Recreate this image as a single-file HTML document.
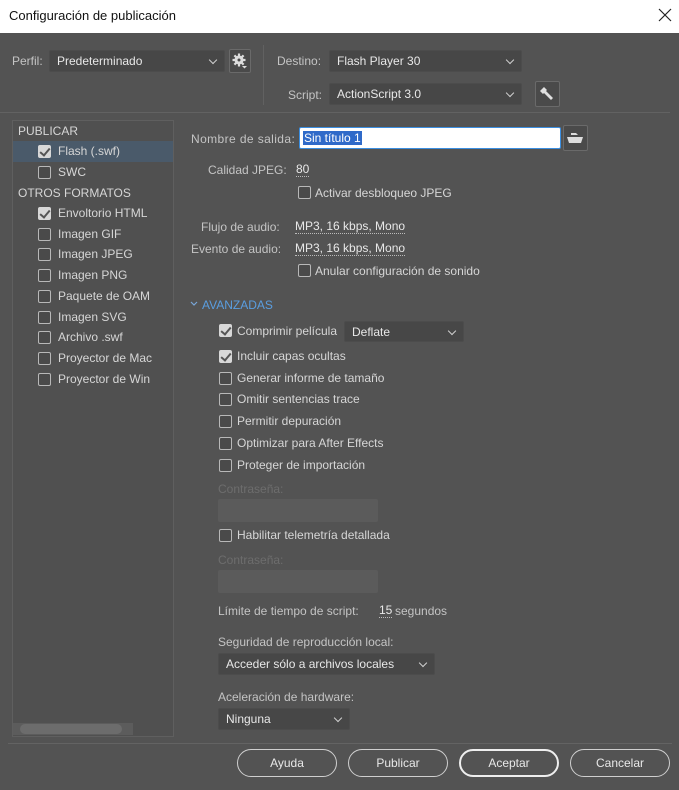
<!DOCTYPE html>
<html><head><meta charset="utf-8"><style>
*{box-sizing:border-box;margin:0;padding:0}
body{width:679px;height:790px;background:#535353;font-family:"Liberation Sans",sans-serif;font-size:12px;color:#d6d6d6;position:relative;overflow:hidden}
.a{position:absolute;white-space:nowrap}
.t{line-height:14px}
.lbl{color:#c4c4c4}
.dd{position:absolute;background:#474747;border:1px solid #4c4c4c;border-radius:2px;color:#e8e8e8;padding-left:7px;line-height:20px}
.dd:after{content:"";position:absolute;right:8px;top:6px;width:5px;height:5px;border-right:1px solid #cfcfcf;border-bottom:1px solid #cfcfcf;transform:rotate(45deg)}
.cb{position:absolute;width:13px;height:13px;border:1px solid #b8b8b8;border-radius:2px;background:#4a4a4a}
.cb.on{background:#d8d8d8;border-color:#d8d8d8}
.cb.on:after{content:"";position:absolute;left:3px;top:0px;width:4px;height:8px;border-right:2px solid #555;border-bottom:2px solid #555;transform:rotate(40deg)}
.u{border-bottom:1px dotted #bbb;color:#e8e8e8}
.btn{position:absolute;top:749px;height:28px;width:100px;border:1px solid #cfcfcf;border-radius:14px;text-align:center;line-height:26px;color:#e8e8e8}
.dim{color:#6d6d6d}
.box{position:absolute;background:#5b5b5b;border-radius:2px}
</style></head><body>
<div class="a" style="left:0;top:0;width:679px;height:33px;background:#fff"></div>
<div class="a" style="left:9px;top:8px;font-size:13px;color:#111">Configuración de publicación</div>
<svg class="a" style="left:658px;top:8px" width="14" height="14"><path d="M1 1L13 13M13 1L1 13" stroke="#222" stroke-width="1.2"/></svg>

<div class="a lbl t" style="left:12px;top:54px">Perfil:</div>
<div class="dd" style="left:49px;top:50px;width:176px;height:22px">Predeterminado</div>
<div class="a" style="left:229px;top:49px;width:22px;height:24px;border:1px solid #6a6a6a;border-radius:2px;background:#4a4a4a"></div>
<svg class="a" style="left:231px;top:52px" width="18" height="18"><g stroke="#ddd" stroke-width="2.2"><path d="M8 1.5v13M1.5 8h13M3.4 3.4l9.2 9.2M12.6 3.4l-9.2 9.2"/></g><circle cx="8" cy="8" r="4.5" fill="#ddd"/><circle cx="8" cy="8" r="1.5" fill="#4a4a4a"/><path d="M11 14h5l-2.5 2.5z" fill="#ddd"/></svg>
<div class="a" style="left:263px;top:45px;width:1px;height:60px;background:#616161"></div>
<div class="a lbl t" style="left:277px;top:54px">Destino:</div>
<div class="dd" style="left:329px;top:50px;width:193px;height:22px">Flash Player 30</div>
<div class="a lbl t" style="left:288px;top:88px">Script:</div>
<div class="dd" style="left:329px;top:83px;width:193px;height:22px">ActionScript 3.0</div>
<div class="a" style="left:535px;top:81px;width:25px;height:26px;border:1px solid #6a6a6a;border-radius:2px;background:#4a4a4a"></div>
<svg class="a" style="left:539px;top:86px" width="16" height="16"><path d="M3 3l2-2 3 3-1 1 7 7-2 2-7-7-1 1-3-3z" fill="#e0e0e0"/></svg>
<div class="a" style="left:0;top:112px;width:670px;height:1px;background:#626262"></div>

<div class="a" style="left:12px;top:120px;width:162px;height:617px;border:1px solid #5f5f5f;background:#505050"></div>
<div class="a" style="left:13px;top:141px;width:160px;height:21px;background:#4a5a6a"></div>
<div class="a t" style="left:18px;top:124px">PUBLICAR</div>
<div class="cb on" style="left:38px;top:145px"></div><div class="a t" style="left:58px;top:144px">Flash (.swf)</div>
<div class="cb" style="left:38px;top:166px"></div><div class="a t" style="left:58px;top:165px">SWC</div>
<div class="a t" style="left:18px;top:186px">OTROS FORMATOS</div>
<div class="cb on" style="left:38px;top:207px"></div><div class="a t" style="left:58px;top:206px">Envoltorio HTML</div>
<div class="cb" style="left:38px;top:228px"></div><div class="a t" style="left:58px;top:227px">Imagen GIF</div>
<div class="cb" style="left:38px;top:248px"></div><div class="a t" style="left:58px;top:247px">Imagen JPEG</div>
<div class="cb" style="left:38px;top:269px"></div><div class="a t" style="left:58px;top:268px">Imagen PNG</div>
<div class="cb" style="left:38px;top:290px"></div><div class="a t" style="left:58px;top:289px">Paquete de OAM</div>
<div class="cb" style="left:38px;top:311px"></div><div class="a t" style="left:58px;top:310px">Imagen SVG</div>
<div class="cb" style="left:38px;top:331px"></div><div class="a t" style="left:58px;top:330px">Archivo .swf</div>
<div class="cb" style="left:38px;top:352px"></div><div class="a t" style="left:58px;top:351px">Proyector de Mac</div>
<div class="cb" style="left:38px;top:373px"></div><div class="a t" style="left:58px;top:372px">Proyector de Win</div>
<div class="a" style="left:13px;top:723px;width:120px;height:12px;background:#5c5c5c"></div>
<div class="a" style="left:20px;top:724px;width:102px;height:10px;background:#6c6c6c;border-radius:5px"></div>

<div class="a lbl t" style="left:191px;top:132px;letter-spacing:0.4px">Nombre de salida:</div>
<div class="a" style="left:299px;top:127px;width:262px;height:22px;background:#fff;border:1px solid #3b8ee0;border-radius:2px"></div>
<div class="a t" style="left:303px;top:131px;background:#2f6ac9;color:#fff;padding:0 1px">Sin título 1</div>
<div class="a" style="left:563px;top:125px;width:25px;height:26px;border:1px solid #6a6a6a;border-radius:2px;background:#4a4a4a"></div>
<svg class="a" style="left:566px;top:130px" width="18" height="16"><path d="M5 3h5l2 2h-7z" fill="#ddd"/><path d="M1 7h16l-2 6H3z" fill="#ddd"/></svg>

<div class="a lbl t" style="left:208px;top:163px">Calidad JPEG:</div>
<div class="a t u" style="left:296px;top:162px">80</div>
<div class="cb" style="left:298px;top:186px"></div><div class="a t" style="left:315px;top:186px">Activar desbloqueo JPEG</div>
<div class="a lbl t" style="left:201px;top:220px">Flujo de audio:</div>
<div class="a t u" style="left:295px;top:219px">MP3, 16 kbps, Mono</div>
<div class="a lbl t" style="left:191px;top:242px">Evento de audio:</div>
<div class="a t u" style="left:295px;top:241px">MP3, 16 kbps, Mono</div>
<div class="cb" style="left:298px;top:264px"></div><div class="a t" style="left:315px;top:264px">Anular configuración de sonido</div>

<svg class="a" style="left:190px;top:300px" width="8" height="8"><path d="M1 2l3 3 3-3" stroke="#7aa7d8" fill="none" stroke-width="1.2"/></svg>
<div class="a t" style="left:202px;top:298px;color:#5a9ee0">AVANZADAS</div>

<div class="cb on" style="left:219px;top:324px"></div><div class="a t" style="left:237px;top:324px">Comprimir película</div>
<div class="dd" style="left:344px;top:321px;width:120px;height:21px">Deflate</div>
<div class="cb on" style="left:219px;top:350px"></div><div class="a t" style="left:237px;top:349px">Incluir capas ocultas</div>
<div class="cb" style="left:219px;top:372px"></div><div class="a t" style="left:237px;top:371px">Generar informe de tamaño</div>
<div class="cb" style="left:219px;top:393px"></div><div class="a t" style="left:237px;top:392px">Omitir sentencias trace</div>
<div class="cb" style="left:219px;top:415px"></div><div class="a t" style="left:237px;top:414px">Permitir depuración</div>
<div class="cb" style="left:219px;top:437px"></div><div class="a t" style="left:237px;top:436px">Optimizar para After Effects</div>
<div class="cb" style="left:219px;top:459px"></div><div class="a t" style="left:237px;top:458px">Proteger de importación</div>
<div class="a t dim" style="left:218px;top:482px">Contraseña:</div>
<div class="box" style="left:218px;top:499px;width:160px;height:23px"></div>
<div class="cb" style="left:219px;top:529px"></div><div class="a t" style="left:237px;top:528px">Habilitar telemetría detallada</div>
<div class="a t dim" style="left:218px;top:553px">Contraseña:</div>
<div class="box" style="left:218px;top:570px;width:160px;height:23px"></div>

<div class="a lbl t" style="left:218px;top:604px">Límite de tiempo de script:</div>
<div class="a t u" style="left:379px;top:603px">15</div>
<div class="a lbl t" style="left:395px;top:604px">segundos</div>
<div class="a lbl t" style="left:218px;top:635px">Seguridad de reproducción local:</div>
<div class="dd" style="left:218px;top:653px;width:217px;height:22px">Acceder sólo a archivos locales</div>
<div class="a lbl t" style="left:218px;top:690px">Aceleración de hardware:</div>
<div class="dd" style="left:218px;top:708px;width:132px;height:22px">Ninguna</div>

<div class="a" style="left:8px;top:743px;width:664px;height:1px;background:#636363"></div>
<div class="btn" style="left:237px">Ayuda</div>
<div class="btn" style="left:348px">Publicar</div>
<div class="btn" style="left:459px;border:2px solid #eee;line-height:24px">Aceptar</div>
<div class="btn" style="left:570px">Cancelar</div>
</body></html>
